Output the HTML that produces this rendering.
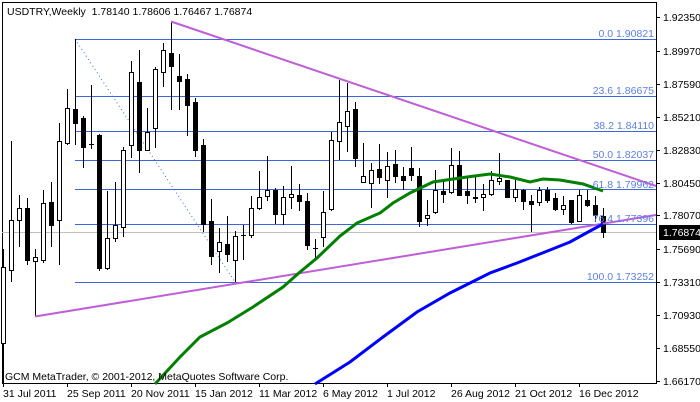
<!DOCTYPE html>
<html><head><meta charset="utf-8"><style>
html,body{margin:0;padding:0;background:#fff;width:700px;height:402px;overflow:hidden}
svg{display:block;font-family:"Liberation Sans","DejaVu Sans",sans-serif}
</style></head><body>
<svg width="700" height="402" viewBox="0 0 700 402" xmlns="http://www.w3.org/2000/svg">
<rect width="700" height="402" fill="#fff"/>
<g shape-rendering="crispEdges">
<line x1="2.5" y1="2" x2="2.5" y2="384" stroke="#000"/>
<line x1="2" y1="2.5" x2="657" y2="2.5" stroke="#000"/>
<line x1="656.5" y1="2" x2="656.5" y2="384" stroke="#000"/>
<line x1="2" y1="383.5" x2="657" y2="383.5" stroke="#000"/>
<!-- fib lines -->
<g stroke="#3f66dc">
<line x1="75" y1="39.5" x2="656" y2="39.5"/>
<line x1="75" y1="96.5" x2="656" y2="96.5"/>
<line x1="75" y1="131.5" x2="656" y2="131.5"/>
<line x1="75" y1="160.5" x2="656" y2="160.5"/>
<line x1="75" y1="189.5" x2="656" y2="189.5"/>
<line x1="75" y1="224.5" x2="656" y2="224.5"/>
<line x1="75" y1="282.5" x2="656" y2="282.5"/>
</g>
<line x1="2" y1="232.5" x2="656" y2="232.5" stroke="#c0c0c0"/>
<!-- axis ticks -->
<g stroke="#000">
<line x1="656" y1="17.5" x2="660" y2="17.5"/><line x1="656" y1="51.5" x2="660" y2="51.5"/><line x1="656" y1="84.5" x2="660" y2="84.5"/><line x1="656" y1="117.5" x2="660" y2="117.5"/><line x1="656" y1="150.5" x2="660" y2="150.5"/><line x1="656" y1="183.5" x2="660" y2="183.5"/><line x1="656" y1="215.5" x2="660" y2="215.5"/><line x1="656" y1="249.5" x2="660" y2="249.5"/><line x1="656" y1="282.5" x2="660" y2="282.5"/><line x1="656" y1="315.5" x2="660" y2="315.5"/><line x1="656" y1="348.5" x2="660" y2="348.5"/><line x1="656" y1="381.5" x2="660" y2="381.5"/>
<line x1="3.5" y1="383" x2="3.5" y2="387"/><line x1="67.5" y1="383" x2="67.5" y2="387"/><line x1="131.5" y1="383" x2="131.5" y2="387"/><line x1="195.5" y1="383" x2="195.5" y2="387"/><line x1="259.5" y1="383" x2="259.5" y2="387"/><line x1="323.5" y1="383" x2="323.5" y2="387"/><line x1="387.5" y1="383" x2="387.5" y2="387"/><line x1="451.5" y1="383" x2="451.5" y2="387"/><line x1="515.5" y1="383" x2="515.5" y2="387"/><line x1="579.5" y1="383" x2="579.5" y2="387"/>
</g>
</g>
<line x1="75" y1="39" x2="235" y2="282" stroke="#3f66dc" stroke-dasharray="1,3"/>
<!-- candles -->
<g id="c" stroke="#000" shape-rendering="crispEdges"></g>
<g stroke="#000" shape-rendering="crispEdges">
<path d="M3.5 249V385M11.5 141V282M19.5 195V247M27.5 198V265M35.5 249V317M43.5 190V263M51.5 182V247M59.5 123V265M67.5 89V145M75.5 39V145M83.5 116V168M91.5 85V149M99.5 134V271M107.5 191V270M115.5 182V242M123.5 147V237M131.5 61V158M139.5 50V173M147.5 108V148M155.5 67V148M163.5 43V87M171.5 22V110M179.5 54V110M187.5 74V136M195.5 98V157M203.5 139V232M211.5 199V265M219.5 228V273M227.5 216V262M235.5 231V282M243.5 225V260M251.5 196V238M259.5 171V210M267.5 156V201M275.5 188V224M283.5 186V225M291.5 166V209M299.5 184V211M307.5 193V250M315.5 239V258M323.5 191V247M331.5 132V211M339.5 80V160M347.5 83V152M355.5 102V167M363.5 143V182M371.5 163V208M379.5 144V184M387.5 152V198M395.5 150V183M403.5 167V190M411.5 147V181M419.5 168V227M427.5 200V226M435.5 170V214M443.5 180V203M451.5 148V194M459.5 151V195M467.5 178V204M475.5 177V203M483.5 184V211M491.5 171V196M499.5 153V185M507.5 180V198M515.5 180V202M523.5 189V210M531.5 195V232M539.5 187V206M547.5 187V203M555.5 193V211M563.5 196V215M571.5 200V224M579.5 190V222M587.5 190V207M595.5 196V222M603.5 208V238"/>
<path d="M89 144.5H94M241 235.5H246M313 248.5H318" />
<g fill="#fff">
<rect x="1.5" y="267.5" width="4" height="76"/><rect x="9.5" y="220.5" width="4" height="50"/><rect x="17.5" y="208.5" width="4" height="12"/><rect x="33.5" y="257.5" width="4" height="4"/><rect x="41.5" y="203.5" width="4" height="57"/><rect x="57.5" y="141.5" width="4" height="79"/><rect x="65.5" y="108.5" width="4" height="35"/><rect x="105.5" y="238.5" width="4" height="30"/><rect x="113.5" y="225.5" width="4" height="13"/><rect x="121.5" y="150.5" width="4" height="77"/><rect x="129.5" y="72.5" width="4" height="73"/><rect x="145.5" y="132.5" width="4" height="18"/><rect x="153.5" y="69.5" width="4" height="59"/><rect x="161.5" y="50.5" width="4" height="22"/><rect x="217.5" y="242.5" width="4" height="9"/><rect x="233.5" y="236.5" width="4" height="24"/><rect x="249.5" y="208.5" width="4" height="27"/><rect x="257.5" y="197.5" width="4" height="11"/><rect x="265.5" y="190.5" width="4" height="6"/><rect x="281.5" y="197.5" width="4" height="17"/><rect x="289.5" y="194.5" width="4" height="3"/><rect x="321.5" y="212.5" width="4" height="25"/><rect x="329.5" y="140.5" width="4" height="69"/><rect x="337.5" y="122.5" width="4" height="19"/><rect x="345.5" y="111.5" width="4" height="15"/><rect x="361.5" y="176.5" width="4" height="6"/><rect x="369.5" y="170.5" width="4" height="13"/><rect x="385.5" y="166.5" width="4" height="14"/><rect x="425.5" y="215.5" width="4" height="3"/><rect x="433.5" y="190.5" width="4" height="22"/><rect x="449.5" y="165.5" width="4" height="27"/><rect x="481.5" y="194.5" width="4" height="3"/><rect x="489.5" y="180.5" width="4" height="14"/><rect x="497.5" y="178.5" width="4" height="3"/><rect x="513.5" y="189.5" width="4" height="8"/><rect x="537.5" y="190.5" width="4" height="12"/><rect x="561.5" y="205.5" width="4" height="4"/><rect x="577.5" y="195.5" width="4" height="26"/>
</g>
<g fill="#000">
<rect x="25.5" y="208.5" width="4" height="52"/><rect x="49.5" y="202.5" width="4" height="23"/><rect x="73.5" y="109.5" width="4" height="14"/><rect x="81.5" y="118.5" width="4" height="29"/><rect x="97.5" y="135.5" width="4" height="133"/><rect x="137.5" y="82.5" width="4" height="68"/><rect x="169.5" y="53.5" width="4" height="13"/><rect x="177.5" y="76.5" width="4" height="5"/><rect x="185.5" y="79.5" width="4" height="26"/><rect x="193.5" y="102.5" width="4" height="48"/><rect x="201.5" y="145.5" width="4" height="79"/><rect x="209.5" y="221.5" width="4" height="35"/><rect x="225.5" y="244.5" width="4" height="10"/><rect x="273.5" y="190.5" width="4" height="24"/><rect x="297.5" y="195.5" width="4" height="6"/><rect x="305.5" y="201.5" width="4" height="44"/><rect x="353.5" y="109.5" width="4" height="49"/><rect x="377.5" y="169.5" width="4" height="8"/><rect x="393.5" y="164.5" width="4" height="12"/><rect x="401.5" y="176.5" width="4" height="4"/><rect x="409.5" y="168.5" width="4" height="7"/><rect x="417.5" y="176.5" width="4" height="45"/><rect x="441.5" y="191.5" width="4" height="3"/><rect x="457.5" y="165.5" width="4" height="30"/><rect x="465.5" y="191.5" width="4" height="4"/><rect x="473.5" y="197.5" width="4" height="1"/><rect x="505.5" y="180.5" width="4" height="17"/><rect x="521.5" y="190.5" width="4" height="11"/><rect x="529.5" y="201.5" width="4" height="3"/><rect x="545.5" y="190.5" width="4" height="10"/><rect x="553.5" y="198.5" width="4" height="11"/><rect x="569.5" y="200.5" width="4" height="22"/><rect x="585.5" y="200.5" width="4" height="5"/><rect x="593.5" y="205.5" width="4" height="10"/><rect x="601.5" y="216.5" width="4" height="16"/>
</g>
</g>
<!-- trend lines -->
<line x1="171" y1="21.5" x2="656" y2="186" stroke="#bf5fd8" stroke-width="2"/>
<line x1="35" y1="316.5" x2="656" y2="215" stroke="#bf5fd8" stroke-width="2"/>
<!-- MAs -->
<polyline fill="none" stroke="#008000" stroke-width="3" points="155,384 180,357 200,337 227,323 253,307 283,287 300,272 317,258 340,236 357,223 380,213 393,203 410,193 433,182 467,177 490,174 510,177 530,182 543,179 560,180 583,184 603,191"/>
<polyline fill="none" stroke="#0000ff" stroke-width="3" points="315,384 350,362 383,337 417,312 450,293 490,273 517,263 550,250 570,242 590,231 603,224"/>
<!-- text -->
<g font-size="10.5" fill="#000">
<text x="7" y="15">USDTRY,Weekly&#160; 1.78140 1.78606 1.76467 1.76874</text>
<text x="5" y="380">GCM MetaTrader, © 2001-2012, MetaQuotes Software Corp.</text>
</g>
<g font-size="10.5" fill="#5b7fe6" text-anchor="end">
<text x="654" y="37">0.0 1.90821</text>
<text x="654" y="94">23.6 1.86675</text>
<text x="654" y="129">38.2 1.84110</text>
<text x="654" y="158">50.0 1.82037</text>
<text x="654" y="188">61.8 1.79962</text>
<text x="654" y="222">76.4 1.77396</text>
<text x="654" y="280">100.0 1.73252</text>
</g>
<g font-size="10.5" fill="#000">
<text x="663" y="21">1.92350</text><text x="663" y="55">1.89970</text><text x="663" y="88">1.87590</text><text x="663" y="121">1.85210</text><text x="663" y="154">1.82830</text><text x="663" y="187">1.80450</text><text x="663" y="219">1.78070</text><text x="663" y="253">1.75690</text><text x="663" y="286">1.73310</text><text x="663" y="319">1.70930</text><text x="663" y="352">1.68550</text><text x="663" y="385">1.66170</text>
</g>
<rect x="659" y="225" width="41" height="15" fill="#000"/>
<text x="663" y="236" font-size="10.5" fill="#fff">1.76874</text>
<g font-size="10.5" fill="#000">
<text x="3" y="397">31 Jul 2011</text><text x="67" y="397">25 Sep 2011</text><text x="131" y="397">20 Nov 2011</text><text x="195" y="397">15 Jan 2012</text><text x="259" y="397">11 Mar 2012</text><text x="323" y="397">6 May 2012</text><text x="387" y="397">1 Jul 2012</text><text x="451" y="397">26 Aug 2012</text><text x="515" y="397">21 Oct 2012</text><text x="579" y="397">16 Dec 2012</text>
</g>
</svg>
</body></html>
